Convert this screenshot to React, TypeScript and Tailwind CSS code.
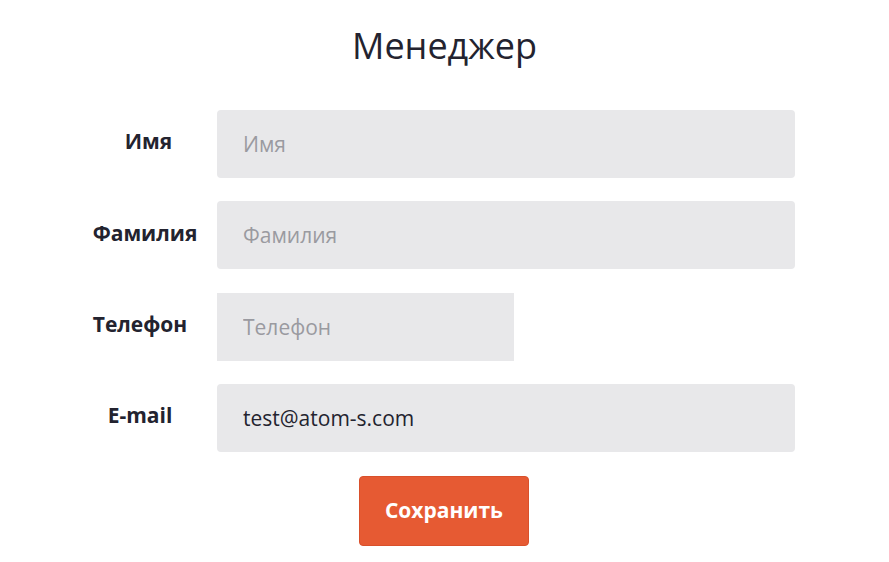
import React from 'react';

const FIELDS = [
  { label: 'Имя', placeholder: 'Имя', value: '', short: false, shift: 'pl-[7px]' },
  { label: 'Фамилия', placeholder: 'Фамилия', value: '', short: false, shift: '' },
  { label: 'Телефон', placeholder: 'Телефон', value: '', short: true, shift: 'pr-[10px]' },
  { label: 'E-mail', placeholder: 'E-mail', value: 'test@atom-s.com', short: false, shift: 'pr-[10px]' },
];

export default function App() {
  return (
    <div className="w-[889px] h-[562px] bg-white font-['Open_Sans',sans-serif] text-[#23232f]">
      <h1 className="pt-[21px] text-center text-[36px] leading-[50px] font-normal">Менеджер</h1>
      <form className="mt-[39px] flex flex-col gap-[23.4px]" onSubmit={(e) => e.preventDefault()}>
        {FIELDS.map((f) => (
          <div key={f.label} className="flex items-center">
            <label className={`w-[120px] ml-[85px] mr-[12px] text-center text-[21px] font-bold pb-[4px] ${f.shift}`}>
              {f.label}
            </label>
            <input
              className={`h-[68px] bg-[#e8e8ea] px-[26px] text-[21px] text-[#23232f] placeholder:text-[#9a9aa0] outline-none ${
                f.short ? 'w-[297px]' : 'w-[578px] rounded-[4px]'
              }`}
              placeholder={f.placeholder}
              defaultValue={f.value}
            />
          </div>
        ))}
        <div className="flex justify-center -mt-[23px]">
          <button
            type="submit"
            className="mt-[23px] w-[170px] h-[70px] bg-[#e65a33] border border-[#d9502b] rounded-[4px] text-white text-[21px] font-bold ml-[-1px]"
          >
            Сохранить
          </button>
        </div>
      </form>
    </div>
  );
}
